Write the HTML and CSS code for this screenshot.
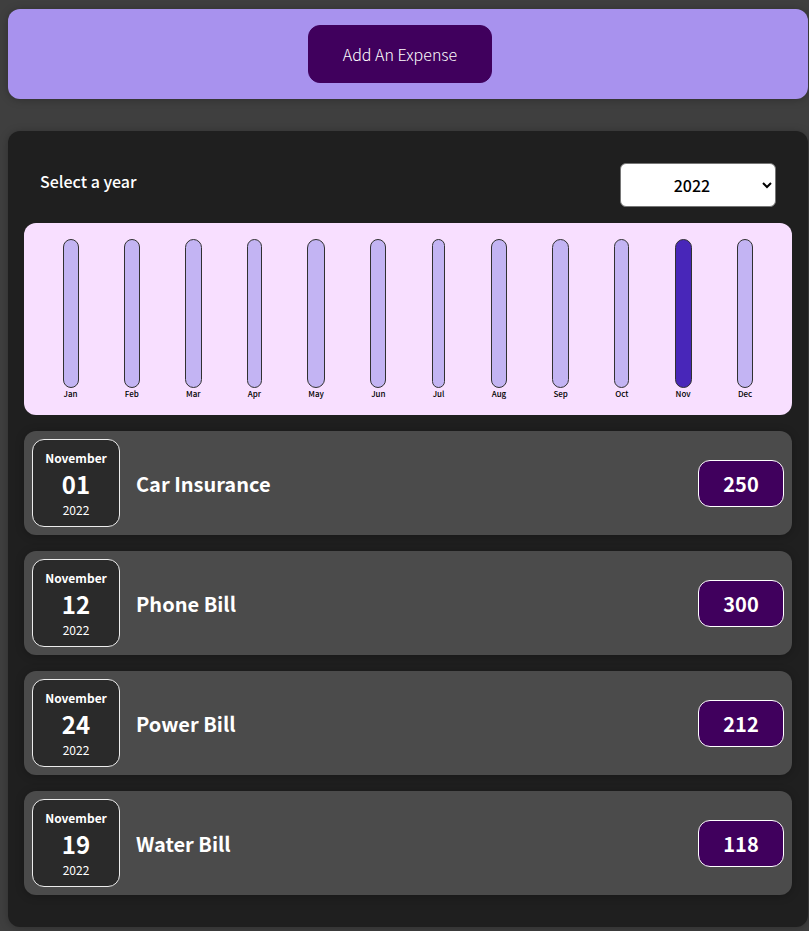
FILE: index.html
```html
<!DOCTYPE html>
<html lang="en">
<head>
<meta charset="utf-8">
<meta name="viewport" content="width=device-width, initial-scale=1">
<title>Expenses</title>
<link rel="stylesheet" href="styles.css">
</head>
<body>
<section class="new-expense"><button type="button" class="add-button">Add An Expense</button></section>
<main class="expenses">
  <div class="filter">
    <label class="filter-label" for="year">Select a year</label>
    <select class="filter-select" id="year">
      <option>2022</option><option>2021</option><option>2020</option><option>2019</option>
    </select>
  </div>
  <div class="chart">
    <div class="month"><div class="bar"></div><div class="month-label">Jan</div></div>
    <div class="month"><div class="bar"></div><div class="month-label">Feb</div></div>
    <div class="month"><div class="bar"></div><div class="month-label">Mar</div></div>
    <div class="month"><div class="bar"></div><div class="month-label">Apr</div></div>
    <div class="month"><div class="bar"></div><div class="month-label">May</div></div>
    <div class="month"><div class="bar"></div><div class="month-label">Jun</div></div>
    <div class="month"><div class="bar"></div><div class="month-label">Jul</div></div>
    <div class="month"><div class="bar"></div><div class="month-label">Aug</div></div>
    <div class="month"><div class="bar"></div><div class="month-label">Sep</div></div>
    <div class="month"><div class="bar"></div><div class="month-label">Oct</div></div>
    <div class="month"><div class="bar bar-full"></div><div class="month-label">Nov</div></div>
    <div class="month"><div class="bar"></div><div class="month-label">Dec</div></div>
  </div>
  <ul class="list">
    <li class="item">
      <div class="date"><div class="date-month">November</div><div class="date-day">01</div><div class="date-year">2022</div></div>
      <h2 class="title">Car Insurance</h2><div class="price">250</div>
    </li>
    <li class="item">
      <div class="date"><div class="date-month">November</div><div class="date-day">12</div><div class="date-year">2022</div></div>
      <h2 class="title">Phone Bill</h2><div class="price">300</div>
    </li>
    <li class="item">
      <div class="date"><div class="date-month">November</div><div class="date-day">24</div><div class="date-year">2022</div></div>
      <h2 class="title">Power Bill</h2><div class="price">212</div>
    </li>
    <li class="item">
      <div class="date"><div class="date-month">November</div><div class="date-day">19</div><div class="date-year">2022</div></div>
      <h2 class="title">Water Bill</h2><div class="price">118</div>
    </li>
  </ul>
</main>
</body>
</html>
```
FILE: styles.css
```css
* { box-sizing: border-box; }

body {
  margin: 0;
  padding: 9px 1px 4px 8px;
  background: #3f3f3f;
  color: #fff;
  font-family: "Noto Sans CJK JP", "Noto Sans", sans-serif;
}

.new-expense,
.expenses {
  max-width: 800px;
  margin: 0 auto;
  border-radius: 12px;
  box-shadow: 0 1px 8px rgba(0, 0, 0, 0.25);
}

.new-expense {
  margin-bottom: 32px;
  padding: 16px 32px 16px 16px;
  background: #a892ee;
  text-align: center;
}

.add-button {
  display: block;
  height: 58px;
  margin: 0 auto;
  padding: 0 34px;
  border: 1px solid #40005d;
  border-radius: 12px;
  background: #40005d;
  color: #fff;
  font: inherit;
  font-size: 16px;
  font-weight: 300;
}

.expenses {
  padding: 32px 16px;
  background: #1f1f1f;
}

.filter {
  display: flex;
  justify-content: space-between;
  padding: 0 16px;
  margin-bottom: 16px;
}

.filter-label {
  font-size: 16px;
  font-weight: 500;
  line-height: 36px;
}

.filter-select {
  width: 156px;
  height: 44px;
  padding: 8px 0;
  border: 1px solid #767676;
  border-radius: 6px;
  background: #fff;
  color: #000;
  font: inherit;
  font-size: 16px;
  font-weight: 500;
  text-align: center;
}

.chart {
  display: flex;
  justify-content: space-around;
  height: 192px;
  padding: 16px;
  border-radius: 12px;
  background: #f8dfff;
}

.month {
  display: flex;
  flex-direction: column;
}

.bar {
  flex: 1;
  border: 1px solid #313131;
  border-radius: 12px;
  background: #c3b4f3;
}

.bar-full { background: #4826b9; }

.month-label {
  padding: 0 1px;
  color: #000;
  font-size: 8px;
  font-weight: 500;
  line-height: 11px;
  text-align: center;
}

.list {
  display: grid;
  gap: 16px;
  margin: 16px 0 0;
  padding: 0;
  list-style: none;
}

.item {
  display: flex;
  align-items: center;
  gap: 16px;
  padding: 8px;
  border-radius: 12px;
  background: #4b4b4b;
  box-shadow: 0 1px 8px rgba(0, 0, 0, 0.25);
}

.date {
  display: flex;
  flex-direction: column;
  align-items: center;
  justify-content: center;
  width: 88px;
  height: 88px;
  padding-top: 2px;
  border: 1px solid #ececec;
  border-radius: 12px;
  background: #2a2a2a;
}

.date-month {
  font-size: 12px;
  font-weight: bold;
  line-height: 16px;
}

.date-day {
  font-size: 24px;
  font-weight: bold;
  line-height: 36px;
}

.date-year {
  font-size: 12px;
  line-height: 16px;
}

.title {
  flex: 1;
  margin: 0;
  font-size: 20px;
  font-weight: bold;
}

.price {
  min-width: 86px;
  padding: 0 24px;
  border: 1px solid #fff;
  border-radius: 12px;
  background: #40005d;
  font-size: 20px;
  font-weight: bold;
  line-height: 45px;
  text-align: center;
}
```
